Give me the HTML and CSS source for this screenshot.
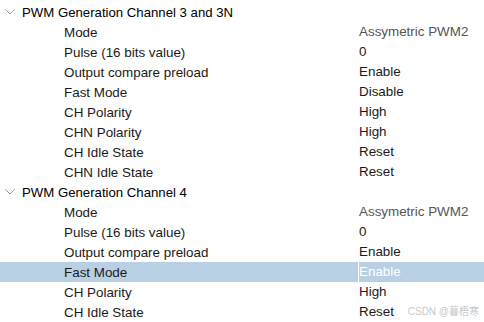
FILE: index.html
```html
<!DOCTYPE html>
<html lang="en">
<head>
    <meta charset="UTF-8">
    <meta name="viewport" content="width=device-width, initial-scale=1.0">
    <title>Parameter Settings</title>
    <link rel="stylesheet" href="styles.css">
</head>
<body>
    <div class="tree">
        <div class="group">
            <svg class="chevron" width="10" height="6" viewBox="0 0 10 6"><path d="M0.5 0.5 L5 5 L9.5 0.5" fill="none" stroke="#999" stroke-width="1"/></svg>
            <span>PWM Generation Channel 3 and 3N</span>
        </div>
        <div class="row"><span class="label">Mode</span><span class="value dim">Assymetric PWM2</span></div>
        <div class="row"><span class="label">Pulse (16 bits value)</span><span class="value">0</span></div>
        <div class="row"><span class="label">Output compare preload</span><span class="value">Enable</span></div>
        <div class="row"><span class="label">Fast Mode</span><span class="value">Disable</span></div>
        <div class="row"><span class="label">CH Polarity</span><span class="value">High</span></div>
        <div class="row"><span class="label">CHN Polarity</span><span class="value">High</span></div>
        <div class="row"><span class="label">CH Idle State</span><span class="value">Reset</span></div>
        <div class="row"><span class="label">CHN Idle State</span><span class="value">Reset</span></div>

        <div class="group">
            <svg class="chevron" width="10" height="6" viewBox="0 0 10 6"><path d="M0.5 0.5 L5 5 L9.5 0.5" fill="none" stroke="#999" stroke-width="1"/></svg>
            <span>PWM Generation Channel 4</span>
        </div>
        <div class="row"><span class="label">Mode</span><span class="value dim">Assymetric PWM2</span></div>
        <div class="row"><span class="label">Pulse (16 bits value)</span><span class="value">0</span></div>
        <div class="row"><span class="label">Output compare preload</span><span class="value">Enable</span></div>
        <div class="row selected"><span class="label">Fast Mode</span><span class="value">Enable</span></div>
        <div class="row"><span class="label">CH Polarity</span><span class="value">High</span></div>
        <div class="row"><span class="label">CH Idle State</span><span class="value">Reset</span></div>
    </div>

    <div class="watermark">CSDN @暮梧寒</div>
</body>
</html>
```

FILE: styles.css
```css
body {
    margin: 0;
    padding-top: 2px;
    background: #fff;
    font-family: "Liberation Sans", Arial, "Noto Sans CJK SC", sans-serif;
    font-size: 13.4px;
    color: #1a1a1a;
    position: relative;
    height: 320px;
    overflow: hidden;
}
.group {
    display: flex;
    align-items: center;
    height: 20px;
    font-size: 13.2px;
    color: #000;
}
.chevron {
    margin-left: 5px;
    margin-right: 7px;
}
.row {
    display: grid;
    grid-template-columns: 294px 1fr;
    height: 20px;
    align-items: center;
    padding-left: 64px;
}
.value {
    padding-left: 1px;
    height: 20px;
    line-height: 20px;
}
.value.dim {
    color: #555;
}
.row.selected {
    background: #b9cfe4;
}
.row.selected .value {
    color: #fff;
    border-left: 1px solid #fff;
    padding-left: 0;
}
.watermark {
    position: absolute;
    right: 5px;
    bottom: 4px;
    font-size: 10px;
    color: #c8c8c8;
}
```
